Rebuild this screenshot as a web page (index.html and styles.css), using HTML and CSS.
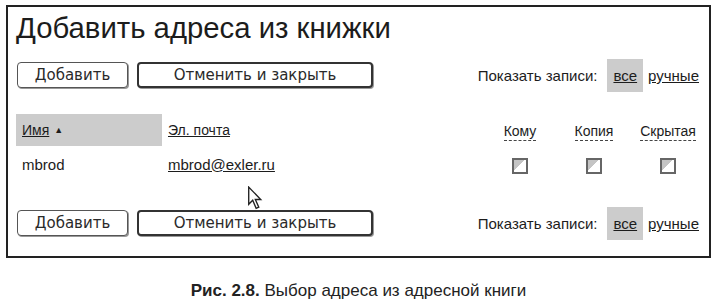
FILE: index.html
```html
<!DOCTYPE html>
<html>
<head>
    <meta charset="utf-8">
    <link rel="stylesheet" href="styles.css">
</head>
<body>
    <div class="frame">
        <h1 class="title">Добавить адреса из книжки</h1>

        <div class="toolbar">
            <div class="buttons">
                <button class="btn">Добавить</button>
                <button class="btn btn-default">Отменить и закрыть</button>
            </div>
            <div class="filter">
                <span>Показать записи:</span>
                <a class="filter-item active">все</a>
                <a class="filter-item">ручные</a>
            </div>
        </div>

        <div class="list">
            <div class="cell head sorted"><a>Имя</a><span class="arrow">▲</span></div>
            <div class="cell head"><a>Эл. почта</a></div>
            <div class="cell head center"><span class="dashed">Кому</span></div>
            <div class="cell head center"><span class="dashed">Копия</span></div>
            <div class="cell head center"><span class="dashed">Скрытая</span></div>

            <div class="cell row">mbrod</div>
            <div class="cell row"><a>mbrod@exler.ru</a></div>
            <div class="cell row center"><span class="check"></span></div>
            <div class="cell row center"><span class="check"></span></div>
            <div class="cell row center"><span class="check"></span></div>
        </div>

        <div class="toolbar bottom">
            <div class="buttons">
                <button class="btn">Добавить</button>
                <button class="btn btn-default">Отменить и закрыть</button>
            </div>
            <div class="filter">
                <span>Показать записи:</span>
                <a class="filter-item active">все</a>
                <a class="filter-item">ручные</a>
            </div>
        </div>

        <svg class="cursor" width="16" height="24" viewBox="0 0 13 21">
            <path d="M1,1 L1,16 L4.5,12.5 L7.5,19.5 L9.8,18.5 L6.8,11.8 L11.5,11.8 Z" fill="#fff" stroke="#222" stroke-width="1.2" stroke-linejoin="miter"/>
        </svg>
    </div>

    <p class="caption"><b>Рис. 2.8.</b> Выбор адреса из адресной книги</p>
</body>
</html>
```

FILE: styles.css
```css
body {
    margin: 0;
    font-family: "Liberation Sans", Arial, sans-serif;
    color: #1c1c1c;
    background: #fff;
}
.frame {
    position: relative;
    margin: 5px 0 0 6px;
    width: 689px;
    border: 2px solid #222;
    padding: 0 4px 16px 8px;
}
.title {
    margin: 4px 0 0 0;
    font-size: 29.3px;
    line-height: 34px;
    font-weight: normal;
}
.toolbar {
    display: flex;
    justify-content: space-between;
    align-items: center;
    height: 33px;
    margin-top: 14px;
    padding-right: 6px;
}
.toolbar.bottom {
    margin-top: 23px;
}
.buttons {
    display: flex;
    gap: 9px;
    padding-left: 1px;
    margin-top: -2px;
}
.btn {
    height: 26px;
    padding: 0;
    background: #fff;
    border: 1px solid #555;
    border-radius: 4px;
    box-shadow: 1px 1px 0 #999;
    font-family: "DejaVu Sans", Verdana, sans-serif;
    font-size: 15px;
    color: #2a2a2a;
    width: 111px;
}
.btn-default {
    width: 236px;
    border: 2px solid #333;
}
.filter {
    display: flex;
    align-items: center;
    height: 33px;
    font-size: 15px;
}
.filter-item {
    text-decoration: underline;
    color: #1c1c1c;
    margin-left: 5px;
}
.filter-item.active {
    display: flex;
    align-items: center;
    height: 33px;
    padding: 0 6px;
    margin-left: 10px;
    background: #cccccc;
}
.list {
    display: grid;
    grid-template-columns: 146px 1fr 74px 74px 74px;
    margin-top: 22px;
}
.cell {
    display: flex;
    align-items: center;
}
.cell.center {
    justify-content: center;
}
.head {
    height: 32px;
    font-size: 14px;
}
.head a {
    text-decoration: underline;
    padding-left: 6px;
}
.head.sorted {
    background: #cccccc;
}
.arrow {
    font-size: 9px;
    margin-left: 5px;
}
.dashed {
    border-bottom: 1px dashed #444;
    padding-bottom: 1px;
    margin-top: 4px;
}
.row {
    height: 36px;
    font-size: 15px;
    padding-left: 6px;
}
.row.center {
    padding-left: 0;
    padding-top: 2px;
}
.row a {
    text-decoration: underline;
}
.check {
    display: block;
    width: 12px;
    height: 12px;
    border: 2px solid #666;
    background: linear-gradient(135deg, #c4c4c4 45%, #fff 45%);
}
.cursor {
    position: absolute;
    left: 239px;
    top: 179px;
}
.caption {
    margin: 23px 0 0 0;
    text-align: center;
    font-size: 17px;
    line-height: 20px;
    color: #222;
}
```
